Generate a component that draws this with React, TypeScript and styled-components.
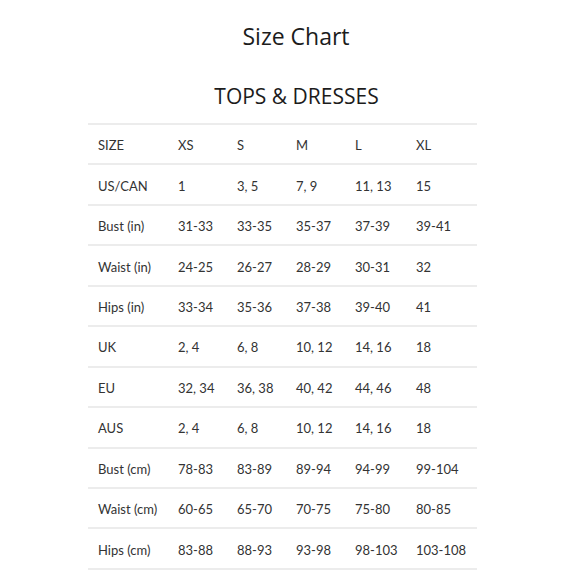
import React from "react";
import styled, { createGlobalStyle } from "styled-components";

const Global = createGlobalStyle`
  html, body { margin: 0; padding: 0; background: #fff; }
  body { width: 580px; height: 580px; overflow: hidden; }
`;

const Page = styled.div`
  width: 580px;
  height: 580px;
  display: flex;
  flex-direction: column;
  align-items: center;
  padding-top: 20px;
  box-sizing: border-box;
  color: #222;
`;

const Title = styled.h1`
  margin: 0 0 0 12px;
  font-family: "Open Sans", sans-serif;
  font-weight: 400;
  font-size: 23px;
  line-height: 32px;
  color: #1c1c1c;
`;

const Subtitle = styled.h2`
  margin: 30px 0 0 13px;
  font-family: "Open Sans", sans-serif;
  font-weight: 400;
  font-size: 21px;
  line-height: 28px;
  color: #1c1c1c;
`;

const Table = styled.div`
  align-self: flex-start;
  margin-top: 13px;
  margin-left: 88px;
  width: 389px;
  display: grid;
  grid-template-columns: 80px 59px 59px 59px 61px 71px;
  border-top: 2px solid #ececec;
`;

const Cell = styled.div`
  height: 38.45px;
  border-bottom: 2px solid #ececec;
  display: flex;
  align-items: center;
  padding-left: 10px;
  padding-top: 2px;
  box-sizing: border-box;
  height: 40.45px;
  font-family: "Lato", "DejaVu Sans", sans-serif;
  font-size: 13px;
  color: #333;
  white-space: nowrap;
`;

const rows: string[][] = [
  ["SIZE", "XS", "S", "M", "L", "XL"],
  ["US/CAN", "1", "3, 5", "7, 9", "11, 13", "15"],
  ["Bust (in)", "31-33", "33-35", "35-37", "37-39", "39-41"],
  ["Waist (in)", "24-25", "26-27", "28-29", "30-31", "32"],
  ["Hips (in)", "33-34", "35-36", "37-38", "39-40", "41"],
  ["UK", "2, 4", "6, 8", "10, 12", "14, 16", "18"],
  ["EU", "32, 34", "36, 38", "40, 42", "44, 46", "48"],
  ["AUS", "2, 4", "6, 8", "10, 12", "14, 16", "18"],
  ["Bust (cm)", "78-83", "83-89", "89-94", "94-99", "99-104"],
  ["Waist (cm)", "60-65", "65-70", "70-75", "75-80", "80-85"],
  ["Hips (cm)", "83-88", "88-93", "93-98", "98-103", "103-108"],
];

export default function App() {
  return (
    <>
      <Global />
      <Page>
        <Title>Size Chart</Title>
        <Subtitle>TOPS &amp; DRESSES</Subtitle>
        <Table>
          {rows.map((r, i) =>
            r.map((c, j) => <Cell key={`${i}-${j}`}>{c}</Cell>)
          )}
        </Table>
      </Page>
    </>
  );
}
